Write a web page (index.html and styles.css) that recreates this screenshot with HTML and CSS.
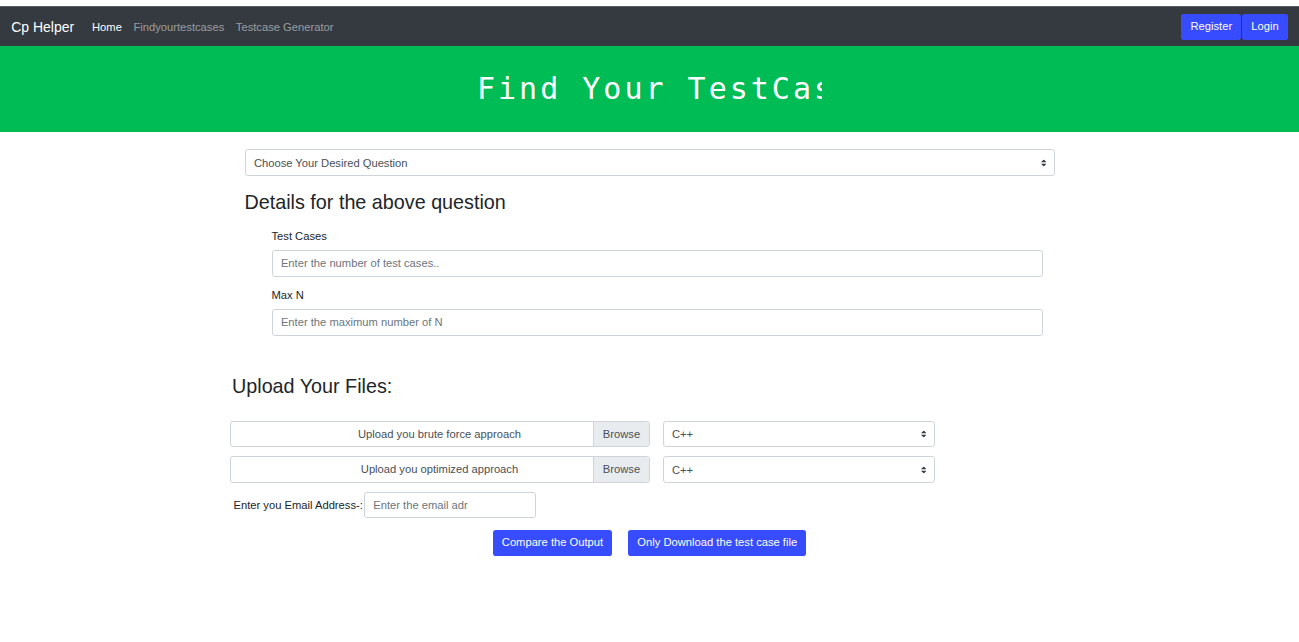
FILE: index.html
```html
<!DOCTYPE html>
<html lang="en">
<head>
<meta charset="utf-8">
<title>Cp Helper</title>
<link rel="stylesheet" href="styles.css">
</head>
<body>
<div class="top-strip"></div>
<nav class="navbar">
  <div class="nav-left">
    <a class="brand" href="#">Cp Helper</a>
    <a class="nav-link active" href="#">Home</a>
    <a class="nav-link" href="#">Findyourtestcases</a>
    <a class="nav-link" href="#">Testcase Generator</a>
  </div>
  <div class="nav-right">
    <button class="btn">Register</button>
    <button class="btn">Login</button>
  </div>
</nav>
<header class="hero">
  <div class="typewriter">Find Your TestCases</div>
</header>
<main class="container">
  <div class="select-wrap">
    <select class="select"><option>Choose Your Desired Question</option></select>
    <svg class="arrow" viewBox="0 0 4 5"><path d="M2 0L0 2h4zm0 5L0 3h4z"/></svg>
  </div>
  <h3 class="heading">Details for the above question</h3>
  <div class="details">
    <div class="form-group">
      <label class="label">Test Cases</label>
      <input class="input" placeholder="Enter the number of test cases..">
    </div>
    <div class="form-group">
      <label class="label">Max N</label>
      <input class="input" placeholder="Enter the maximum number of N">
    </div>
  </div>
  <section class="upload">
    <h3 class="heading upload-title">Upload Your Files:</h3>
    <div class="upload-row">
      <div class="file"><span class="file-label">Upload you brute force approach</span><span class="browse">Browse</span></div>
      <div class="select-wrap lang">
        <select class="select"><option>C++</option></select>
        <svg class="arrow" viewBox="0 0 4 5"><path d="M2 0L0 2h4zm0 5L0 3h4z"/></svg>
      </div>
    </div>
    <div class="upload-row">
      <div class="file"><span class="file-label">Upload you optimized approach</span><span class="browse">Browse</span></div>
      <div class="select-wrap lang">
        <select class="select"><option>C++</option></select>
        <svg class="arrow" viewBox="0 0 4 5"><path d="M2 0L0 2h4zm0 5L0 3h4z"/></svg>
      </div>
    </div>
    <div class="email-row">
      <label class="email-label">Enter you Email Address-:</label>
      <input class="input email" placeholder="Enter the email adr">
    </div>
  </section>
  <div class="actions">
    <button class="btn">Compare the Output</button>
    <button class="btn">Only Download the test case file</button>
  </div>
</main>
</body>
</html>
```
FILE: styles.css
```css
* { box-sizing: border-box; }
html, body { margin: 0; }
body {
  font-family: "Liberation Sans", Arial, sans-serif;
  font-size: 11.2px;
  line-height: 1.5;
  color: #212529;
  background: #fff;
}
.top-strip { height: 6px; background: #fff; }
.navbar {
  display: flex;
  align-items: center;
  justify-content: space-between;
  height: 40px;
  padding: 0 11.2px;
  background: #343a40;
  border-top: 1px solid #5b5f64;
}
.nav-left { display: flex; align-items: center; margin-top: 1px; }
.brand {
  font-size: 14px;
  color: #fff;
  text-decoration: none;
  margin-right: 12px;
}
.nav-link {
  font-size: 11.2px;
  padding: 0 5.8px;
  color: rgba(255, 255, 255, .5);
  text-decoration: none;
}
.nav-link.active { color: #fff; }
.nav-right { display: flex; gap: 1px; }
.btn {
  font-family: inherit;
  font-size: 11.2px;
  line-height: 1;
  height: 26px;
  padding: 0 9.1px;
  border: 0;
  border-radius: 2.8px;
  background: #384cff;
  color: #fff;
  cursor: pointer;
}
.hero {
  height: 86px;
  display: flex;
  align-items: center;
  justify-content: center;
  background: #00bc55;
}
.typewriter {
  font-family: "DejaVu Sans Mono", monospace;
  font-size: 30px;
  letter-spacing: 3px;
  line-height: 1;
  color: #fff;
  width: 345px;
  overflow: hidden;
  white-space: nowrap;
}
.container {
  width: 810px;
  margin: 0 auto;
  padding-top: 17px;
}
.select-wrap { position: relative; }
.select {
  appearance: none;
  -webkit-appearance: none;
  display: block;
  width: 100%;
  height: 27px;
  padding: 0 8.4px;
  border: 1px solid #ced4da;
  border-radius: 2.8px;
  background: #fff;
  font-family: inherit;
  font-size: 11.2px;
  color: #495057;
}
.arrow {
  position: absolute;
  right: 8.4px;
  top: 50%;
  width: 5.6px;
  height: 7px;
  transform: translateY(-50%);
  fill: #343a40;
}
.heading {
  font-size: 19.75px;
  font-weight: 500;
  line-height: 1.2;
  margin: 15.3px 0 5.6px;
}
.details {
  margin-left: 27px;
  width: 771px;
  padding-top: 7px;
}
.form-group { margin-bottom: 10.2px; }
.label { display: block; margin-bottom: 5.6px; }
.input {
  display: block;
  width: 100%;
  height: 26.6px;
  padding: 0 8.4px;
  border: 1px solid #ced4da;
  border-radius: 2.8px;
  font-family: inherit;
  font-size: 11.2px;
  color: #495057;
  background: #fff;
}
.input::placeholder { color: #6c757d; }
.upload {
  margin-left: -15px;
  padding-top: 29.5px;
}
.upload-title {
  margin: 0 0 21.5px;
  padding-left: 2.5px;
}
.upload-row {
  display: flex;
  gap: 13px;
  margin-bottom: 9px;
}
.file {
  position: relative;
  width: 420px;
  height: 26.6px;
  border: 1px solid #ced4da;
  border-radius: 2.8px;
  text-align: center;
  color: #495057;
  line-height: 24.6px;
  overflow: hidden;
}
.browse {
  position: absolute;
  top: 0;
  right: 0;
  bottom: 0;
  padding: 0 8.4px;
  background: #e9ecef;
  border-left: 1px solid #ced4da;
  color: #495057;
}
.lang { width: 272px; }
.lang .select { height: 26.6px; }
.email-row {
  display: flex;
  align-items: center;
  padding-left: 4px;
}
.email-label { white-space: nowrap; padding-right: 1px; }
.input.email { width: 172px; }
.actions {
  display: flex;
  justify-content: center;
  gap: 16px;
  margin-top: 11.2px;
}
```
